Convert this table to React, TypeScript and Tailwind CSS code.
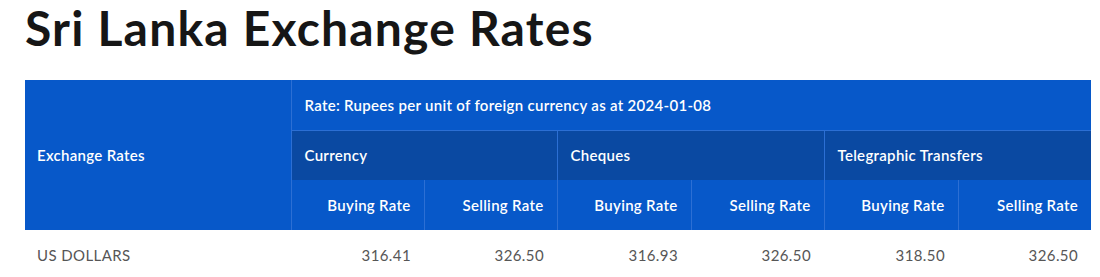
const groups = ["Currency", "Cheques", "Telegraphic Transfers"];

const rows = [
  { name: "US DOLLARS", values: ["316.41", "326.50", "316.93", "326.50", "318.50", "326.50"] },
];

export default function App() {
  return (
    <div className="min-h-screen bg-white px-[25px] font-['Lato','Noto_Sans',sans-serif]">
      <h1 className="text-[48px] font-bold leading-[56px] tracking-[1.2px] text-[#161616]">
        Sri Lanka Exchange Rates
      </h1>
      <table className="mt-[24px] w-[1066px] table-fixed border-collapse text-[15px] tracking-[0.3px]">
        <colgroup>
          <col className="w-[266px]" />
          <col className="w-[133px]" />
          <col className="w-[133px]" />
          <col className="w-[134px]" />
          <col className="w-[133px]" />
          <col className="w-[134px]" />
          <col className="w-[133px]" />
        </colgroup>
        <thead className="font-semibold text-white">
          <tr className="h-[50px] bg-[#0758c9]">
            <th rowSpan={3} className="px-3 text-left font-semibold">
              Exchange Rates
            </th>
            <th colSpan={6} className="border-b border-l border-[#2c6fd4] px-[13px] text-left font-semibold">
              Rate: Rupees per unit of foreign currency as at 2024-01-08
            </th>
          </tr>
          <tr className="h-[50px] bg-[#0a49a2]">
            {groups.map((g) => (
              <th key={g} colSpan={2} className="border-l border-[#2c6fd4] px-[13px] text-left font-semibold">
                {g}
              </th>
            ))}
          </tr>
          <tr className="h-[50px] bg-[#0758c9]">
            {groups.flatMap((g) => [
              <th key={g + "b"} className="border-l border-[#2c6fd4] px-[13px] text-right font-semibold">
                Buying Rate
              </th>,
              <th key={g + "s"} className="border-l border-[#2c6fd4] px-[13px] text-right font-semibold">
                Selling Rate
              </th>,
            ])}
          </tr>
        </thead>
        <tbody className="tracking-[0.4px] text-[#565656]">
          {rows.map((r) => (
            <tr key={r.name} className="h-[50px]">
              <td className="px-3 text-left">{r.name}</td>
              {r.values.map((v, i) => (
                <td key={i} className="px-[13px] text-right">
                  {v}
                </td>
              ))}
            </tr>
          ))}
        </tbody>
      </table>
    </div>
  );
}
